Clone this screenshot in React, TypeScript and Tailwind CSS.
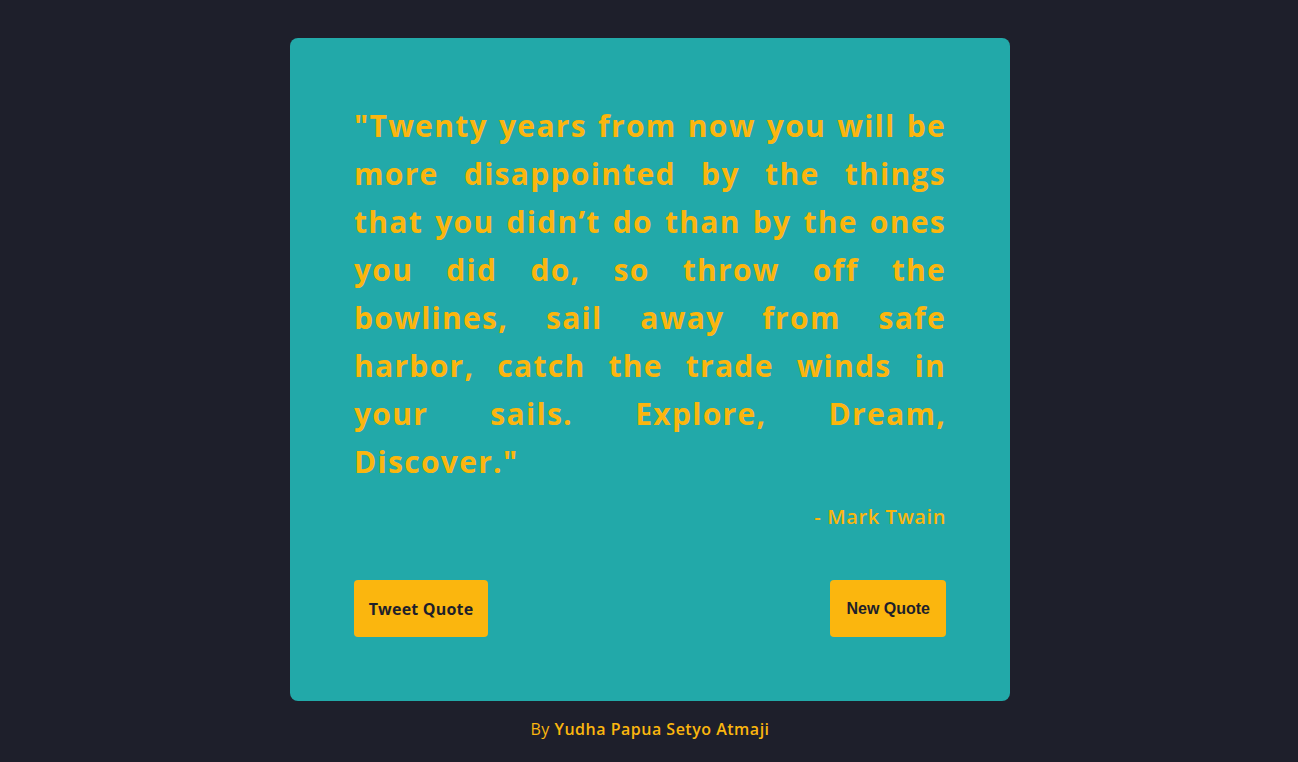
export default function App() {
  const quote =
    '"Twenty years from now you will be more disappointed by the things that you didn’t do than by the ones you did do, so throw off the bowlines, sail away from safe harbor, catch the trade winds in your sails. Explore, Dream, Discover."';

  return (
    <div
      className="min-h-screen bg-[#1e1f2b] flex flex-col items-center pt-[38px] pl-[2px]"
      style={{ fontFamily: '"Open Sans", "Noto Sans", sans-serif' }}
    >
      <div className="w-[720px] bg-[#22a9a9] rounded-lg p-16">
        <p className="text-[30px] leading-[48px] font-bold tracking-[1.3px] text-[#fbb60e] text-justify">
          {quote}
        </p>
        <p className="mt-4 text-right text-[20px] leading-[30px] font-semibold tracking-[0.6px] text-[#fbb60e]">
          - Mark Twain
        </p>
        <div className="mt-12 flex justify-between">
          <a
            href="#"
            className="h-[57px] w-[134px] flex items-center justify-center rounded bg-[#fbb60e] text-[#1e1f2b] text-[16px] font-bold tracking-[0.2px]"
          >
            Tweet Quote
          </a>
          <button
            className="h-[57px] px-4 rounded bg-[#fbb60e] text-[#1e1f2b] text-[16px] font-bold"
            style={{ fontFamily: '"Liberation Sans", Arial, sans-serif' }}
          >
            New Quote
          </button>
        </div>
      </div>
      <p className="mt-4 text-[16px] leading-6 tracking-[0.5px] text-[#fbb60e]">
        By <span className="font-semibold">Yudha Papua Setyo Atmaji</span>
      </p>
    </div>
  );
}
